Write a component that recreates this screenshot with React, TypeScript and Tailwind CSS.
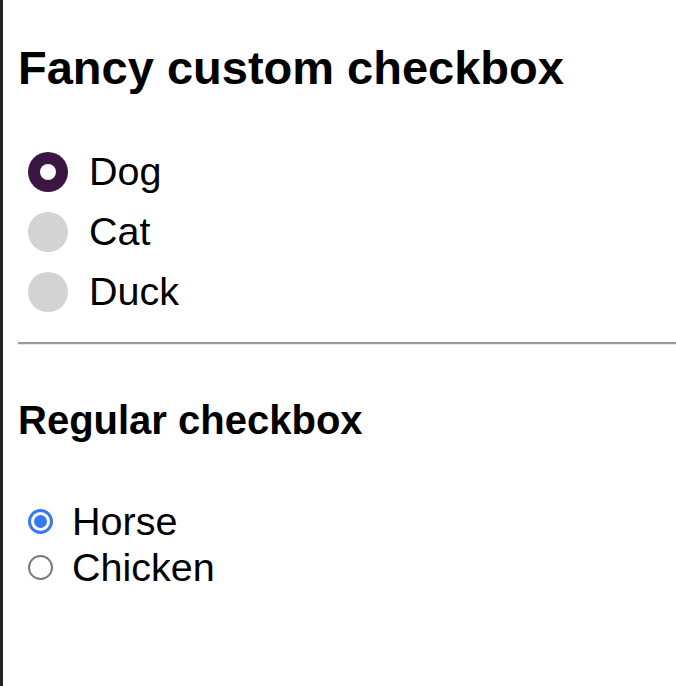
import { useState } from "react";

const fancy = ["Dog", "Cat", "Duck"];
const regular = ["Horse", "Chicken"];

export default function App() {
  const [pet, setPet] = useState("Dog");
  const [farm, setFarm] = useState("Horse");

  return (
    <div className="min-h-screen border-l-[3px] border-[#222] bg-white pl-[15px] text-black font-['Liberation_Sans',Arial,sans-serif]">
      <h1 className="pt-[41px] text-[47px] font-bold leading-[1.15]">Fancy custom checkbox</h1>

      <div className="mt-[47px] flex flex-col pl-[10px]">
        {fancy.map((name) => (
          <label key={name} className="flex h-[60px] cursor-pointer items-center gap-[21px]" onClick={() => setPet(name)}>
            <span
              className={
                pet === name
                  ? "flex size-[40px] items-center justify-center rounded-full bg-[#3c1642]"
                  : "flex size-[40px] items-center justify-center rounded-full bg-[#d3d3d3]"
              }
            >
              {pet === name && <span className="size-[16px] rounded-full bg-white" />}
            </span>
            <span className="text-[39.5px] leading-[1.15]">{name}</span>
          </label>
        ))}
      </div>

      <div className="mt-[20px] border-t-2 border-b border-t-[#9a9a9a] border-b-[#e8e8e8]" />

      <h2 className="mt-[52px] text-[40px] font-bold leading-[1.15]">Regular checkbox</h2>

      <div className="mt-[56px] flex flex-col pl-[10px]">
        {regular.map((name) => (
          <label key={name} className="flex h-[45.5px] cursor-pointer items-center gap-[19px]" onClick={() => setFarm(name)}>
            {farm === name ? (
              <span className="flex size-[25px] items-center justify-center rounded-full border-[3px] border-[#3478f6] bg-white">
                <span className="size-[13px] rounded-full bg-[#3478f6]" />
              </span>
            ) : (
              <span className="size-[25px] rounded-full border-2 border-[#7a7a7a] bg-white" />
            )}
            <span className="text-[39.5px] leading-[1.15]">{name}</span>
          </label>
        ))}
      </div>
    </div>
  );
}
